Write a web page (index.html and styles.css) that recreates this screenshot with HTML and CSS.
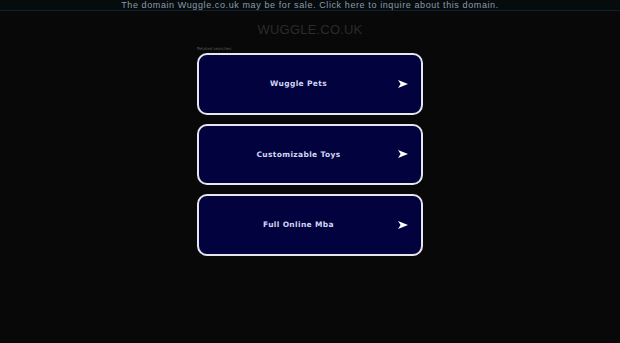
FILE: index.html
```html
<!DOCTYPE html>
<html lang="en">
<head>
<meta charset="utf-8">
<title>wuggle.co.uk</title>
<link rel="stylesheet" href="styles.css">
</head>
<body>
<div class="topbar">The domain Wuggle.co.uk may be for sale. Click here to inquire about this domain.</div>
<h1 class="title">WUGGLE.CO.UK</h1>
<div class="main">
  <div class="related">Related searches</div>
  <a class="card" href="#"><span class="label">Wuggle Pets</span><svg class="arrow" viewBox="0 0 10 8"><path d="M0 0 L10 4 L0 8 L2.6 4 Z" fill="#ffffff"/></svg></a>
  <a class="card" href="#"><span class="label">Customizable Toys</span><svg class="arrow" viewBox="0 0 10 8"><path d="M0 0 L10 4 L0 8 L2.6 4 Z" fill="#ffffff"/></svg></a>
  <a class="card" href="#"><span class="label">Full Online Mba</span><svg class="arrow" viewBox="0 0 10 8"><path d="M0 0 L10 4 L0 8 L2.6 4 Z" fill="#ffffff"/></svg></a>
</div>
</body>
</html>
```
FILE: styles.css
```css
html, body {
  margin: 0;
  padding: 0;
  background: #080808;
}
body {
  font-family: "DejaVu Sans", sans-serif;
  width: 620px;
  height: 343px;
  overflow: hidden;
}
.topbar {
  height: 10px;
  line-height: 10px;
  border-bottom: 1px solid #0d2232;
  background: #060b0e;
  color: #8f9aa6;
  font-family: "Liberation Sans", sans-serif;
  font-size: 9px;
  letter-spacing: 0.6px;
  text-align: center;
  white-space: nowrap;
}
.title {
  margin: 11px 0 0;
  height: 15px;
  line-height: 15px;
  text-align: center;
  font-family: "Liberation Sans", sans-serif;
  font-weight: normal;
  font-size: 13px;
  color: #2b2b2b;
  letter-spacing: 0.2px;
}
.main {
  width: 226px;
  margin: 0 auto;
  display: flex;
  flex-direction: column;
  gap: 9px;
}
.related {
  margin-top: 10px;
  margin-bottom: -7px;
  height: 4px;
  line-height: 4px;
  font-size: 4px;
  color: #5a5a5a;
}
.card {
  box-sizing: border-box;
  height: 61.6px;
  border: 2px solid #e6e6ee;
  border-radius: 10px;
  background: #02023f;
  display: flex;
  align-items: center;
  padding: 0 13px 0 6px;
  text-decoration: none;
}
.label {
  flex: 1;
  text-align: center;
  padding-right: 6px;
  color: #d2d6f2;
  font-family: "DejaVu Sans", sans-serif;
  font-weight: bold;
  font-size: 7.5px;
  letter-spacing: 0.35px;
}
.arrow {
  width: 10px;
  height: 8px;
  display: block;
}
```
